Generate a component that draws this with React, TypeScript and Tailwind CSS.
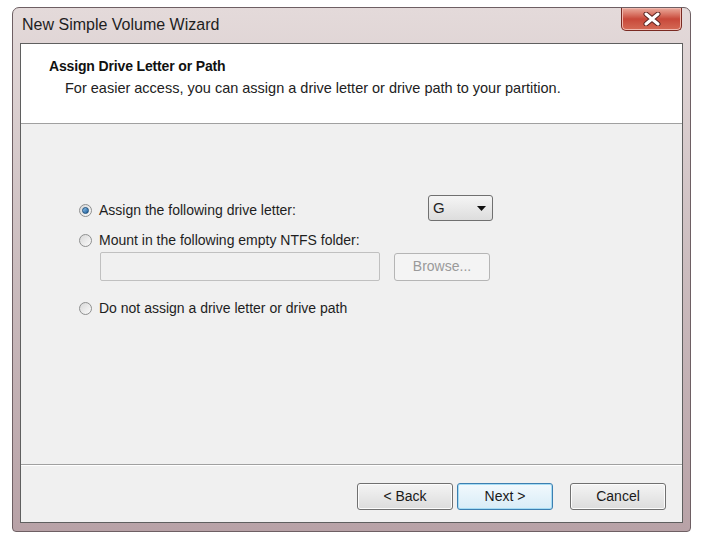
import React from "react";

const font = { fontFamily: '"Liberation Sans", Arial, sans-serif' };

function Radio({ checked }: { checked?: boolean }) {
  return (
    <span className="relative inline-flex h-[13px] w-[13px] shrink-0 items-center justify-center rounded-full border border-[#8e8f8f] bg-gradient-to-br from-[#d8d8d8] to-[#fbfbfb]">
      {checked && (
        <span className="h-[7px] w-[7px] rounded-full border border-[#1c4f7c] bg-gradient-to-br from-[#8fc5ee] to-[#1a5d99]" />
      )}
    </span>
  );
}

function Button({ label, primary }: { label: string; primary?: boolean }) {
  return (
    <button
      type="button"
      className={`flex h-[27px] w-[96px] items-center justify-center rounded-[3px] border text-[14px] text-[#1a1a1a] ${
        primary
          ? "border-[#3c7fb1] bg-gradient-to-b from-[#f2f9fd] to-[#d8ecf7] shadow-[inset_0_0_0_1px_#a6dcf4]"
          : "border-[#707070] bg-gradient-to-b from-[#f4f4f4] to-[#dcdcdc] shadow-[inset_0_0_0_1px_#fcfcfc]"
      }`}
    >
      {label}
    </button>
  );
}

export default function App() {
  return (
    <div className="h-[543px] w-[701px] bg-white pl-[12px] pt-[7px]" style={font}>
      <div className="flex h-[525px] w-[679px] flex-col rounded-t-[7px] rounded-b-[4px] border border-[#6e5f63] bg-gradient-to-b from-[#e4dada] via-[#cbbcbe] to-[#b8a2a7] px-[7px] pb-[8px]">
        <div className="flex h-[35px] shrink-0 items-start justify-between">
          <span className="pl-[2px] pt-[5px] text-[16px] text-[#1e1e1e]">New Simple Volume Wizard</span>
          <span className="mr-[1px] flex h-[23px] w-[61px] items-center justify-center rounded-b-[5px] border border-t-0 border-[#7a2a22] bg-gradient-to-b from-[#e9a99c] via-[#c8483a] to-[#d46a55] shadow-[inset_0_0_0_1px_#f0b8ae]">
            <svg width="18" height="14" viewBox="0 0 18 14">
              <path d="M3 2 L15 12 M15 2 L3 12" stroke="#5a2420" strokeWidth="5" strokeLinecap="round" />
              <path d="M3 2 L15 12 M15 2 L3 12" stroke="#ffffff" strokeWidth="3" strokeLinecap="round" />
            </svg>
          </span>
        </div>
        <div className="flex flex-1 flex-col border border-[#5f5f5f] bg-[#f0f0f0]">
          <div className="h-[80px] shrink-0 border-b border-[#a0a0a0] bg-white pl-[28px] pt-[12px]">
            <div className="text-[14px] font-bold tracking-[-0.15px] text-[#111]">Assign Drive Letter or Path</div>
            <div className="pl-[16px] pt-[1px] text-[14.5px] text-[#222]">
              For easier access, you can assign a drive letter or drive path to your partition.
            </div>
          </div>
          <div className="flex flex-1 flex-col pl-[58px] pt-[74px] text-[14px] text-[#1e1e1e]">
            <div className="flex h-[25px] items-center">
              <Radio checked />
              <span className="ml-[7px] w-[329px]">Assign the following drive letter:</span>
              <span className="mb-[5px] flex h-[26px] w-[65px] items-center justify-between rounded-[3px] border border-[#707070] bg-gradient-to-b from-[#f5f5f5] to-[#dddddd] pl-[4px] pr-[6px] text-[15px]">
                G
                <svg width="9" height="5" viewBox="0 0 9 5">
                  <path d="M0 0 H9 L4.5 5 Z" fill="#111" />
                </svg>
              </span>
            </div>
            <div className="mt-[7px] flex h-[20px] items-center">
              <Radio />
              <span className="ml-[7px]">Mount in the following empty NTFS folder:</span>
            </div>
            <div className="ml-[21px] mt-[2px] flex items-center gap-[14px]">
              <span className="h-[29px] w-[280px] rounded-[2px] border border-[#c0c0c0] bg-[#f0f0f0]" />
              <span className="flex h-[28px] w-[96px] items-center justify-center rounded-[3px] border border-[#b5b5b5] bg-[#f4f4f4] text-[#9a9a9a]">
                Browse...
              </span>
            </div>
            <div className="mt-[17px] flex h-[20px] items-center">
              <Radio />
              <span className="ml-[7px]">Do not assign a drive letter or drive path</span>
            </div>
          </div>
          <div className="flex h-[58px] shrink-0 items-start justify-end gap-[4px] border-t border-[#a0a0a0] pr-[16px] pt-[18px] shadow-[inset_0_1px_0_#ffffff]">
            <Button label="< Back" />
            <Button label="Next >" primary />
            <span className="w-[9px]" />
            <Button label="Cancel" />
          </div>
        </div>
      </div>
    </div>
  );
}
